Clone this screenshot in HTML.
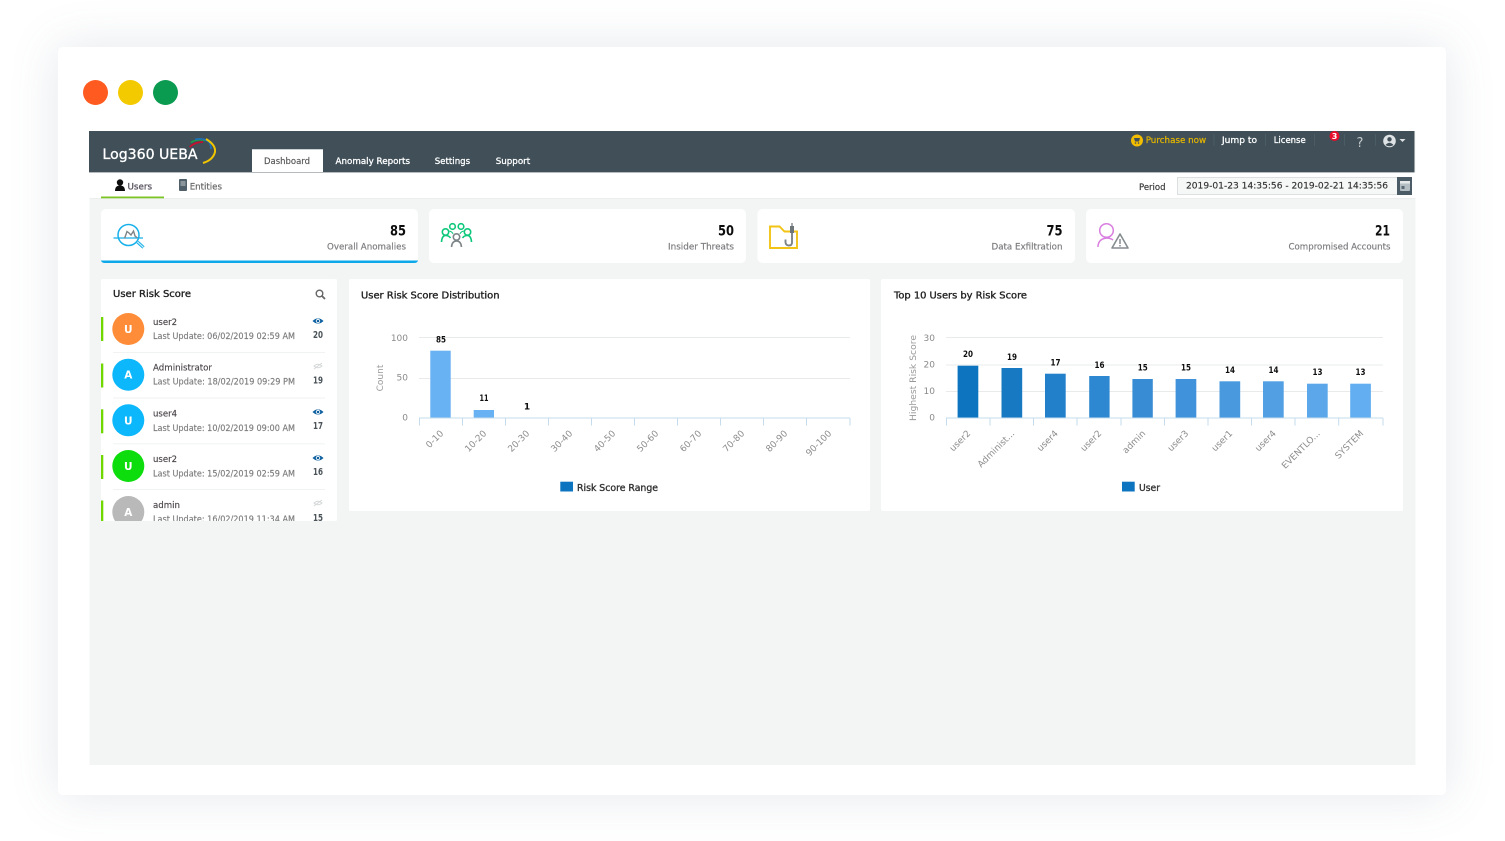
<!DOCTYPE html>
<html><head><meta charset="utf-8"><title>Log360 UEBA</title>
<style>
html,body{margin:0;padding:0;width:1505px;height:841px;overflow:hidden;background:#fff}
#win{position:absolute;left:58px;top:47px;width:1388px;height:748px;background:#fff;border-radius:5px;box-shadow:0 0 48px rgba(95,115,135,.17)}
svg{position:absolute;left:0;top:0}
text{font-family:"DejaVu Sans","Liberation Sans",sans-serif}
</style></head><body>
<div id="win"></div>
<svg width="1505" height="841" viewBox="0 0 1505 841">
<defs>
<clipPath id="lc"><rect x="101" y="279" width="236" height="242"/></clipPath>
<filter id="b" x="-2%" y="-2%" width="104%" height="104%"><feGaussianBlur stdDeviation="0.3"/></filter>
<g id="eye"><path d="M-5.5 0Q0-5.2 5.5 0Q0 5.2-5.5 0Z" fill="#0b5f9f"/><circle r="2.2" fill="#fff"/><circle r="1.3" fill="#0b5f9f"/></g>
<g id="hid" fill="none" stroke="#d5d8d9" stroke-width="1"><path d="M-4 0Q0-3.5 4 0Q0 3.5-4 0Z"/><path d="M-4 3L4-3"/></g>
</defs>
<circle cx="95.5" cy="92.5" r="12.5" fill="#ff5a1f"/>
<circle cx="130.5" cy="92.5" r="12.5" fill="#f3c900"/>
<circle cx="165.5" cy="92.5" r="12.5" fill="#0a9a50"/>
<g filter="url(#b)">
<rect x="89.500" y="131" width="1326" height="634" fill="#f3f5f5"/>
<rect x="89" y="131" width="1325.500" height="41" fill="#3f4f58"/>
<rect x="89" y="172" width="1325.500" height="1" fill="#b4babd"/>
<rect x="89.500" y="173" width="1326" height="25" fill="#fff"/>
<rect x="89.500" y="198" width="1326" height="1" fill="#eceeee"/>

<!-- header -->
<text x="102.5" y="159" font-size="14.5" fill="#fff" stroke="#fff" stroke-width=".35" textLength="95" lengthAdjust="spacingAndGlyphs">Log360 UEBA</text>
<g fill="none" stroke-width="1.7">
<path d="M189.500 147Q195 142 203 142" stroke="#c8102e"/>
<path d="M191 142.500Q197 138.500 205 140.500" stroke="#1e9e4a"/>
<path d="M195 139.500Q203 137.500 209 142Q211 145 211 149" stroke="#1f6fb8"/>
<path d="M206 139Q216 145 215 152Q213 160 203 163" stroke="#f0c400" stroke-width="2"/>
</g>
<rect x="252" y="150" width="71" height="22" fill="#fff"/>
<rect x="252" y="149" width="71" height="1" fill="#c9cfd2"/>
<text x="264" y="164" font-size="9" fill="#555" stroke="#555" stroke-width=".15" textLength="46" lengthAdjust="spacingAndGlyphs">Dashboard</text>
<g font-size="9" fill="#fff" stroke="#fff" stroke-width=".3">
<text x="335.5" y="164" textLength="74.5" lengthAdjust="spacingAndGlyphs">Anomaly Reports</text>
<text x="434.7" y="164" textLength="35.5" lengthAdjust="spacingAndGlyphs">Settings</text>
<text x="495.7" y="164" textLength="34.5" lengthAdjust="spacingAndGlyphs">Support</text>
<text x="1222" y="143" textLength="35" lengthAdjust="spacingAndGlyphs">Jump to</text>
<text x="1273.7" y="143" textLength="32" lengthAdjust="spacingAndGlyphs">License</text>
</g>
<circle cx="1137" cy="140.5" r="6" fill="#f2bd00"/>
<path d="M1134 138h6l-1 3.5h-4z" fill="#3f4f58"/><circle cx="1135.5" cy="143" r=".8" fill="#3f4f58"/><circle cx="1138.5" cy="143" r=".8" fill="#3f4f58"/>
<text x="1145.7" y="143" font-size="9" fill="#e3b400" stroke="#e3b400" stroke-width=".25" textLength="60.5" lengthAdjust="spacingAndGlyphs">Purchase now</text>
<rect x="1213.5" y="134" width="1" height="12" fill="#4c5b64"/>
<rect x="1265" y="134" width="1" height="12" fill="#4c5b64"/>
<rect x="1314" y="134" width="1" height="12" fill="#4c5b64"/>
<rect x="1344" y="134" width="1" height="12" fill="#4c5b64"/>
<rect x="1375" y="134" width="1" height="12" fill="#4c5b64"/>
<circle cx="1334.5" cy="136" r="5" fill="#e8102a"/>
<text x="1334.5" y="139" font-size="8" font-weight="700" fill="#fff" text-anchor="middle">3</text>
<text x="1360" y="147" font-size="13" fill="#c3c9cc" text-anchor="middle">?</text>
<circle cx="1389.5" cy="141" r="6.3" fill="#dfe3e5"/>
<circle cx="1389.5" cy="139.3" r="2.2" fill="#3f4f58"/>
<path d="M1385.5 145q4-4.5 8 0q-4 2.5-8 0z" fill="#3f4f58"/>
<path d="M1399.5 139h6l-3 3z" fill="#dfe3e5"/>

<!-- subnav -->
<circle cx="120" cy="182.500" r="3.200" fill="#111"/>
<path d="M115 191q0-5.500 5-5.500t5 5.500z" fill="#111"/>
<text x="127.5" y="189.5" font-size="9" fill="#5a5560" stroke="#5a5560" stroke-width=".3" textLength="24.500" lengthAdjust="spacingAndGlyphs">Users</text>
<rect x="101" y="196.5" width="63" height="1.8" fill="#7cc528"/>
<rect x="179" y="179" width="8" height="12" rx="1" fill="#50606a"/>
<rect x="180.5" y="181" width="5" height="5" fill="#8a969c"/>
<text x="189.7" y="189.5" font-size="9" fill="#666" stroke="#666" stroke-width=".2" textLength="32.3" lengthAdjust="spacingAndGlyphs">Entities</text>
<text x="1139" y="190" font-size="9" fill="#333" stroke="#333" stroke-width=".15" textLength="26.5" lengthAdjust="spacingAndGlyphs">Period</text>
<rect x="1177.5" y="177.5" width="220" height="17" fill="#f6f7f7" stroke="#dcdfe0"/>
<text x="1186" y="188.5" font-size="9" fill="#333" stroke="#333" stroke-width=".15" textLength="202" lengthAdjust="spacingAndGlyphs">2019-01-23 14:35:56 - 2019-02-21 14:35:56</text>
<rect x="1397" y="177" width="15" height="18" fill="#4b5c66"/>
<rect x="1400" y="181" width="10" height="10" rx="1" fill="#b5bec3"/>
<rect x="1400" y="181" width="10" height="2.5" fill="#e5e9ea"/>
<rect x="1401.5" y="186" width="3" height="3" fill="#5b6b74"/>

<!-- cards -->
<rect x="101" y="209" width="317" height="54" rx="5" fill="#fff"/>
<path d="M101 260.5q.5 2.5 4 2.5h309q3.5 0 4-2.5z" fill="#0ea8ea"/>
<rect x="429" y="209" width="317" height="54" rx="5" fill="#fff"/>
<rect x="757.5" y="209" width="317.5" height="54" rx="5" fill="#fff"/>
<rect x="1086" y="209" width="317" height="54" rx="5" fill="#fff"/>
<g font-size="14" font-weight="700" fill="#111" text-anchor="end">
<text x="406" y="235.5" textLength="16" lengthAdjust="spacingAndGlyphs">85</text>
<text x="734" y="235.5" textLength="16" lengthAdjust="spacingAndGlyphs">50</text>
<text x="1062.5" y="235.5" textLength="16" lengthAdjust="spacingAndGlyphs">75</text>
<text x="1390" y="235.5" textLength="15" lengthAdjust="spacingAndGlyphs">21</text>
</g>
<g font-size="9" fill="#7d7d80" stroke="#7d7d80" stroke-width=".2" text-anchor="end">
<text x="406" y="249.5" textLength="79" lengthAdjust="spacingAndGlyphs">Overall Anomalies</text>
<text x="734" y="249.5" textLength="66" lengthAdjust="spacingAndGlyphs">Insider Threats</text>
<text x="1062.5" y="249.5" textLength="71" lengthAdjust="spacingAndGlyphs">Data Exfiltration</text>
<text x="1390.5" y="249.5" textLength="102" lengthAdjust="spacingAndGlyphs">Compromised Accounts</text>
</g>
<!-- anomaly icon -->
<circle cx="128.5" cy="235" r="10.5" fill="none" stroke="#19b0ea" stroke-width="1.5"/>
<path d="M113.5 238H143" stroke="#19b0ea" stroke-width="1.2" fill="none"/>
<path d="M124.500 238.500L127 231.500 129 233 131 235 133.500 231 135 236 137.500 238" fill="none" stroke="#7d8488" stroke-width="1.400"/>
<path d="M137.500 242l6 5.500" stroke="#19b0ea" stroke-width="3.200" fill="none"/>
<path d="M137.500 242l6 5.500" stroke="#d8f1fb" stroke-width="1.100" fill="none"/>
<!-- group icon -->
<g fill="none" stroke="#0fc77a" stroke-width="1.600">
<circle cx="452.5" cy="226.5" r="2.800"/><circle cx="461" cy="226.5" r="2.800"/>
<circle cx="445.5" cy="232" r="3.200"/><circle cx="467.5" cy="232" r="3.200"/>
<path d="M441.5 242q.5-6.5 4-6.5t5 2.5"/><path d="M471.5 242q-.5-6.5-4-6.5t-5 2.5"/>
<path d="M449.5 231q3 1 3.5 3M463.5 231q-3 1-3.5 3" stroke-width="1.100"/>
</g>
<g fill="none" stroke="#7d8488" stroke-width="1.600">
<circle cx="456.5" cy="237" r="3.200"/><path d="M451.5 247q.5-6 5-6t5 6"/>
</g>
<!-- folder icon -->
<path d="M770 226.500h9.500l5 5h12.500v16.500h-27z" fill="none" stroke="#f3c316" stroke-width="1.900"/>
<path d="M792 223v3" stroke="#6d7479" stroke-width="1.200"/>
<rect x="790" y="226" width="4" height="7" fill="#6d7479"/>
<path d="M792 233v9.500q0 3-3 3t-3.500-3v-3" fill="none" stroke="#7c8489" stroke-width="1.900"/>
<!-- compromised icon -->
<circle cx="1106.5" cy="230.500" r="6.800" fill="none" stroke="#d97fe0" stroke-width="1.500"/>
<path d="M1098 247q0-8 8.500-9 4 0 6.500 2" fill="none" stroke="#d97fe0" stroke-width="1.500"/>
<path d="M1120 234l8 14h-16z" fill="none" stroke="#858c90" stroke-width="1.600" stroke-linejoin="round"/>
<path d="M1120 239v5M1120 245v1.500" stroke="#858c90" stroke-width="1.500"/>

<!-- list panel -->
<rect x="101" y="279" width="236" height="242" rx="2" fill="#fff"/>
<text x="113" y="297" font-size="10" fill="#222" stroke="#222" stroke-width=".35" textLength="78" lengthAdjust="spacingAndGlyphs">User Risk Score</text>
<circle cx="319.5" cy="293.5" r="3.3" fill="none" stroke="#666" stroke-width="1.4"/>
<path d="M322 296l3 3" stroke="#666" stroke-width="1.8"/>
<g clip-path="url(#lc)">
<g fill="#6fd800">
<rect x="101" y="317" width="2.3" height="24"/><rect x="101" y="363.5" width="2.3" height="24"/><rect x="101" y="409.3" width="2.3" height="24"/><rect x="101" y="455" width="2.3" height="24"/><rect x="101" y="500.5" width="2.3" height="24"/>
</g>
<g fill="#f1f2f2">
<rect x="113" y="352" width="212" height="1"/><rect x="113" y="397.5" width="212" height="1"/><rect x="113" y="443.3" width="212" height="1"/><rect x="113" y="489" width="212" height="1"/>
</g>
<circle cx="128.3" cy="329" r="16" fill="#ff8c37"/>
<circle cx="128.3" cy="374.7" r="16" fill="#0ab7fb"/>
<circle cx="128.3" cy="420.3" r="16" fill="#0ab7fb"/>
<circle cx="128.3" cy="466" r="16" fill="#0fdc0f"/>
<circle cx="128.3" cy="512" r="16" fill="#b9b9b9"/>
<g font-size="10.5" font-weight="700" fill="#fff" text-anchor="middle">
<text x="128.3" y="333">U</text><text x="128.3" y="378.7">A</text><text x="128.3" y="424.3">U</text><text x="128.3" y="470">U</text><text x="128.3" y="516">A</text>
</g>
<g font-size="9" fill="#4a4448" stroke="#4a4448" stroke-width=".15">
<text x="153" y="325" textLength="24" lengthAdjust="spacingAndGlyphs">user2</text>
<text x="153" y="370.5" textLength="59" lengthAdjust="spacingAndGlyphs">Administrator</text>
<text x="153" y="416.5" textLength="24" lengthAdjust="spacingAndGlyphs">user4</text>
<text x="153" y="462" textLength="24" lengthAdjust="spacingAndGlyphs">user2</text>
<text x="153" y="508" textLength="27" lengthAdjust="spacingAndGlyphs">admin</text>
</g>
<g font-size="8.5" fill="#7c7c7e" stroke="#7c7c7e" stroke-width=".15">
<text x="153" y="338.8" textLength="142" lengthAdjust="spacingAndGlyphs">Last Update: 06/02/2019 02:59 AM</text>
<text x="153" y="384.5" textLength="142" lengthAdjust="spacingAndGlyphs">Last Update: 18/02/2019 09:29 PM</text>
<text x="153" y="431" textLength="142" lengthAdjust="spacingAndGlyphs">Last Update: 10/02/2019 09:00 AM</text>
<text x="153" y="476.5" textLength="142" lengthAdjust="spacingAndGlyphs">Last Update: 15/02/2019 02:59 AM</text>
<text x="153" y="522" textLength="142" lengthAdjust="spacingAndGlyphs">Last Update: 16/02/2019 11:34 AM</text>
</g>
<use href="#eye" x="318" y="321"/><use href="#hid" x="318" y="366"/><use href="#eye" x="318" y="412"/><use href="#eye" x="318" y="458"/><use href="#hid" x="318" y="503"/>
<g font-size="9.5" font-weight="700" fill="#4a5258" text-anchor="middle">
<text x="318" y="338" textLength="10" lengthAdjust="spacingAndGlyphs">20</text><text x="318" y="383.5" textLength="10" lengthAdjust="spacingAndGlyphs">19</text><text x="318" y="429" textLength="10" lengthAdjust="spacingAndGlyphs">17</text><text x="318" y="475" textLength="10" lengthAdjust="spacingAndGlyphs">16</text><text x="318" y="521" textLength="10" lengthAdjust="spacingAndGlyphs">15</text>
</g>
</g>

<!-- chart 1 -->
<rect x="349" y="279" width="521" height="232" rx="2" fill="#fff"/>
<text x="361" y="298.5" font-size="10" fill="#222" stroke="#222" stroke-width=".35" textLength="138.5" lengthAdjust="spacingAndGlyphs">User Risk Score Distribution</text>
<g fill="#e9ebeb"><rect x="419" y="337" width="431" height="1"/><rect x="419" y="378" width="431" height="1"/></g>
<g font-size="9" fill="#8a8a8a" text-anchor="end"><text x="408" y="341">100</text><text x="408" y="380.5">50</text><text x="408" y="420.5">0</text></g>
<text transform="rotate(-90 383 378)" x="383" y="378" font-size="9" fill="#999" text-anchor="middle">Count</text>
<rect x="430.3" y="350.7" width="20.4" height="67.3" fill="#67b1f2"/>
<rect x="473.7" y="410" width="20.3" height="8" fill="#67b1f2"/>
<path d="M419 418H850" stroke="#c4dcee" stroke-width="1"/>
<path d="M419.5 418v7.5M462.5 418v7.5M505.5 418v7.5M548.5 418v7.5M591.5 418v7.5M634.5 418v7.5M677.5 418v7.5M720.5 418v7.5M763.5 418v7.5M806.5 418v7.5M850 418v7.5" stroke="#c4dcee" stroke-width="1" fill="none"/>
<g font-size="9" font-weight="700" fill="#111" text-anchor="middle"><text x="441" y="342.5" textLength="10" lengthAdjust="spacingAndGlyphs">85</text><text x="484" y="401" textLength="9" lengthAdjust="spacingAndGlyphs">11</text><text x="527" y="409.5">1</text></g>
<g font-size="9" fill="#8c8c8c" text-anchor="end">
<text transform="rotate(-45 444 434)" x="444" y="434">0-10</text>
<text transform="rotate(-45 487 434)" x="487" y="434">10-20</text>
<text transform="rotate(-45 530 434)" x="530" y="434">20-30</text>
<text transform="rotate(-45 573 434)" x="573" y="434">30-40</text>
<text transform="rotate(-45 616 434)" x="616" y="434">40-50</text>
<text transform="rotate(-45 659 434)" x="659" y="434">50-60</text>
<text transform="rotate(-45 702 434)" x="702" y="434">60-70</text>
<text transform="rotate(-45 745 434)" x="745" y="434">70-80</text>
<text transform="rotate(-45 788 434)" x="788" y="434">80-90</text>
<text transform="rotate(-45 832 434)" x="832" y="434">90-100</text>
</g>
<rect x="560.3" y="481.7" width="12.7" height="9.8" fill="#0a74c0"/>
<text x="577" y="491" font-size="9.5" fill="#333" stroke="#333" stroke-width=".35" textLength="81" lengthAdjust="spacingAndGlyphs">Risk Score Range</text>

<!-- chart 2 -->
<rect x="881" y="279" width="522" height="232" rx="2" fill="#fff"/>
<text x="894" y="298.5" font-size="10" fill="#222" stroke="#222" stroke-width=".35" textLength="133" lengthAdjust="spacingAndGlyphs">Top 10 Users by Risk Score</text>
<g fill="#e9ebeb"><rect x="946" y="337" width="437" height="1"/><rect x="946" y="364.5" width="437" height="1"/><rect x="946" y="391" width="437" height="1"/></g>
<g font-size="9" fill="#8a8a8a" text-anchor="end"><text x="935" y="341">30</text><text x="935" y="367.5">20</text><text x="935" y="394">10</text><text x="935" y="420.5">0</text></g>
<text transform="rotate(-90 916 378)" x="916" y="378" font-size="9" fill="#999" text-anchor="middle" textLength="86" lengthAdjust="spacingAndGlyphs">Highest Risk Score</text>
<rect x="957.6" y="365.7" width="20.7" height="52.3" fill="#0a74c0"/>
<rect x="1001.5" y="368" width="20.7" height="50" fill="#1579c2"/>
<rect x="1045" y="373.7" width="20.7" height="44.3" fill="#2280cb"/>
<rect x="1089.2" y="376" width="20.4" height="42" fill="#2f88d1"/>
<rect x="1132.4" y="379" width="20.4" height="39" fill="#378cd4"/>
<rect x="1175.6" y="379" width="20.7" height="39" fill="#4193da"/>
<rect x="1219.5" y="381.3" width="20.7" height="36.7" fill="#4a99df"/>
<rect x="1263" y="381.3" width="20.7" height="36.7" fill="#529fe4"/>
<rect x="1307" y="383.7" width="20.7" height="34.3" fill="#5ba7ea"/>
<rect x="1350.2" y="383.7" width="20.7" height="34.3" fill="#64aef0"/>
<path d="M946 418H1383" stroke="#c4dcee" stroke-width="1"/>
<path d="M946.500 418v7.5M990 418v7.5M1033.500 418v7.5M1077 418v7.5M1121 418v7.5M1164.500 418v7.5M1208 418v7.5M1251.500 418v7.5M1295 418v7.5M1338.700 418v7.5M1383 418v7.5" stroke="#c4dcee" stroke-width="1" fill="none"/>
<g font-size="9" font-weight="700" fill="#111" text-anchor="middle">
<text x="968" y="357" textLength="10" lengthAdjust="spacingAndGlyphs">20</text><text x="1012" y="360" textLength="10" lengthAdjust="spacingAndGlyphs">19</text><text x="1055.5" y="365.5" textLength="10" lengthAdjust="spacingAndGlyphs">17</text><text x="1099.5" y="368" textLength="10" lengthAdjust="spacingAndGlyphs">16</text><text x="1142.8" y="370.5" textLength="10" lengthAdjust="spacingAndGlyphs">15</text><text x="1186" y="370.5" textLength="10" lengthAdjust="spacingAndGlyphs">15</text><text x="1230" y="373" textLength="10" lengthAdjust="spacingAndGlyphs">14</text><text x="1273.5" y="373" textLength="10" lengthAdjust="spacingAndGlyphs">14</text><text x="1317.5" y="375" textLength="10" lengthAdjust="spacingAndGlyphs">13</text><text x="1360.5" y="375" textLength="10" lengthAdjust="spacingAndGlyphs">13</text>
</g>
<g font-size="9" fill="#8c8c8c" text-anchor="end">
<text transform="rotate(-45 971 434)" x="971" y="434">user2</text>
<text transform="rotate(-45 1015 434)" x="1015" y="434">Administ...</text>
<text transform="rotate(-45 1058.5 434)" x="1058.5" y="434">user4</text>
<text transform="rotate(-45 1102 434)" x="1102" y="434">user2</text>
<text transform="rotate(-45 1146 434)" x="1146" y="434">admin</text>
<text transform="rotate(-45 1189 434)" x="1189" y="434">user3</text>
<text transform="rotate(-45 1233 434)" x="1233" y="434">user1</text>
<text transform="rotate(-45 1276.5 434)" x="1276.5" y="434">user4</text>
<text transform="rotate(-45 1320.5 434)" x="1320.5" y="434">EVENTLO...</text>
<text transform="rotate(-45 1364 434)" x="1364" y="434">SYSTEM</text>
</g>
<rect x="1122" y="481.7" width="12.7" height="9.8" fill="#0a74c0"/>
<text x="1139" y="491" font-size="9.5" fill="#333" stroke="#333" stroke-width=".35" textLength="21" lengthAdjust="spacingAndGlyphs">User</text>
</g>
</svg>
</body></html>
